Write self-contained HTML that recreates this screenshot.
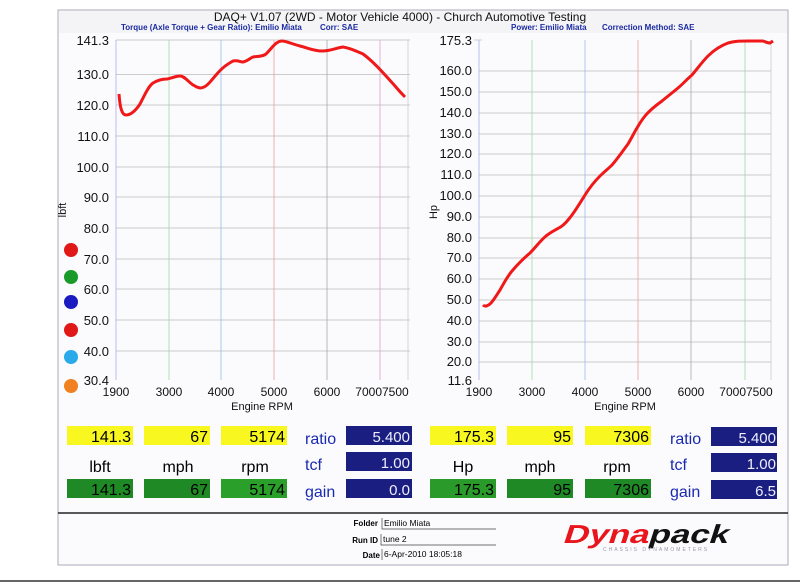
<!DOCTYPE html>
<html><head><style>
body{margin:0;background:#fff;width:800px;height:582px;overflow:hidden;font-family:"Liberation Sans",sans-serif}
</style></head><body>
<svg width="800" height="582" viewBox="0 0 800 582" xmlns="http://www.w3.org/2000/svg" font-family="Liberation Sans, sans-serif">
<rect width="800" height="582" fill="#fff"/>
<rect x="58" y="10" width="730" height="555" fill="#fbfbfd" stroke="#aab" stroke-width="1"/>
<rect x="59" y="11" width="728" height="22" fill="#f4f4f7"/>
<text x="400" y="21" font-size="12" text-anchor="middle" fill="#111">DAQ+ V1.07 (2WD - Motor Vehicle 4000) - Church Automotive Testing</text>
<text x="121" y="30" font-size="8" font-weight="bold" fill="#1a2aa0">Torque (Axle Torque + Gear Ratio): Emilio Miata</text>
<text x="320" y="30" font-size="8" font-weight="bold" fill="#1a2aa0">Corr: SAE</text>
<text x="511" y="30" font-size="8" font-weight="bold" fill="#1a2aa0">Power: Emilio Miata</text>
<text x="602" y="30" font-size="8" font-weight="bold" fill="#1a2aa0">Correction Method: SAE</text>
<g stroke="#bbb" stroke-width="0.7">
<line x1="116" y1="74.6" x2="410" y2="74.6"/><line x1="116" y1="105" x2="410" y2="105"/><line x1="116" y1="136" x2="410" y2="136"/><line x1="116" y1="167" x2="410" y2="167"/><line x1="116" y1="197" x2="410" y2="197"/><line x1="116" y1="228" x2="410" y2="228"/><line x1="116" y1="259" x2="410" y2="259"/><line x1="116" y1="289" x2="410" y2="289"/><line x1="116" y1="320" x2="410" y2="320"/><line x1="116" y1="351" x2="410" y2="351"/><line x1="116" y1="40" x2="410" y2="40"/>
</g>
<g stroke-width="0.8">
<line x1="116" y1="40" x2="116" y2="380" stroke="#aab0ee"/><line x1="169" y1="40" x2="169" y2="380" stroke="#a0dca0"/><line x1="221" y1="40" x2="221" y2="380" stroke="#9be"/><line x1="274" y1="40" x2="274" y2="380" stroke="#e8a0a0"/><line x1="327" y1="40" x2="327" y2="380" stroke="#aaa"/><line x1="380" y1="40" x2="380" y2="380" stroke="#e0a0d0"/><line x1="408" y1="40" x2="408" y2="380" stroke="#ccc"/>
</g>
<g font-size="13" fill="#111" text-anchor="end">
<text x="109" y="45">141.3</text><text x="109" y="79">130.0</text><text x="109" y="110">120.0</text><text x="109" y="141">110.0</text><text x="109" y="172">100.0</text><text x="109" y="202">90.0</text><text x="109" y="233">80.0</text><text x="109" y="264">70.0</text><text x="109" y="294">60.0</text><text x="109" y="325">50.0</text><text x="109" y="356">40.0</text><text x="109" y="385">30.4</text>
</g>
<text x="66" y="210" font-size="11" fill="#111" transform="rotate(-90 66 210)" text-anchor="middle">lbft</text>
<g font-size="12" fill="#111" text-anchor="middle">
<text x="116" y="396">1900</text><text x="169" y="396">3000</text><text x="221" y="396">4000</text><text x="274" y="396">5000</text><text x="327" y="396">6000</text><text x="382" y="396">70007500</text>
</g>
<text x="262" y="410" font-size="11" text-anchor="middle" fill="#111">Engine RPM</text>
<circle cx="71" cy="250" r="7" fill="#e01818"/><circle cx="71" cy="277" r="7" fill="#1a9a2a"/><circle cx="71" cy="302" r="7" fill="#1a1ac0"/><circle cx="71" cy="330" r="7" fill="#e01818"/><circle cx="71" cy="357" r="7" fill="#2aaae8"/><circle cx="71" cy="386" r="7" fill="#f08020"/>
<path d="M119,94 C120,108 122,115 126,115 C131,115 136,110 140,104 C146,92 149,86 153,83 C158,80 162,79 167,79 C172,78 176,76 180,76 C186,76 190,86 200,88 C206,88 210,82 216,75 C222,68 226,65 233,61 C238,60 240,62 243,62 C248,61 250,58 253,57 C258,56 262,57 266,54 C272,48 276,41 282,41 C286,41 292,44 300,46 C308,48 314,51 322,51 C330,51 336,48 343,47 C350,48 356,51 363,54 C374,62 385,75 395,86 C400,92 402,94 405,97" fill="none" stroke="#f01818" stroke-width="3"/>
<g stroke="#bbb" stroke-width="0.7">
<line x1="479" y1="71" x2="771" y2="71"/><line x1="479" y1="92" x2="771" y2="92"/><line x1="479" y1="113" x2="771" y2="113"/><line x1="479" y1="134" x2="771" y2="134"/><line x1="479" y1="154" x2="771" y2="154"/><line x1="479" y1="175" x2="771" y2="175"/><line x1="479" y1="196" x2="771" y2="196"/><line x1="479" y1="217" x2="771" y2="217"/><line x1="479" y1="238" x2="771" y2="238"/><line x1="479" y1="258" x2="771" y2="258"/><line x1="479" y1="279" x2="771" y2="279"/><line x1="479" y1="300" x2="771" y2="300"/><line x1="479" y1="321" x2="771" y2="321"/><line x1="479" y1="342" x2="771" y2="342"/><line x1="479" y1="362" x2="771" y2="362"/><line x1="474" y1="40" x2="482" y2="40"/>
</g>
<g stroke-width="0.8">
<line x1="479" y1="40" x2="479" y2="380" stroke="#aab0ee"/><line x1="532" y1="40" x2="532" y2="380" stroke="#a0dca0"/><line x1="585" y1="40" x2="585" y2="380" stroke="#9be"/><line x1="638" y1="40" x2="638" y2="380" stroke="#e8a0a0"/><line x1="691" y1="40" x2="691" y2="380" stroke="#aaa"/><line x1="745" y1="40" x2="745" y2="380" stroke="#a0dca0"/><line x1="771" y1="40" x2="771" y2="380" stroke="#ccc"/>
</g>
<g font-size="13" fill="#111" text-anchor="end">
<text x="472" y="45">175.3</text><text x="472" y="75">160.0</text><text x="472" y="96">150.0</text><text x="472" y="117">140.0</text><text x="472" y="138">130.0</text><text x="472" y="158">120.0</text><text x="472" y="179">110.0</text><text x="472" y="200">100.0</text><text x="472" y="221">90.0</text><text x="472" y="242">80.0</text><text x="472" y="262">70.0</text><text x="472" y="283">60.0</text><text x="472" y="304">50.0</text><text x="472" y="325">40.0</text><text x="472" y="346">30.0</text><text x="472" y="366">20.0</text><text x="472" y="385">11.6</text>
</g>
<text x="437" y="212" font-size="11" fill="#111" transform="rotate(-90 437 212)" text-anchor="middle">Hp</text>
<g font-size="12" fill="#111" text-anchor="middle">
<text x="479" y="396">1900</text><text x="532" y="396">3000</text><text x="585" y="396">4000</text><text x="638" y="396">5000</text><text x="691" y="396">6000</text><text x="746" y="396">70007500</text>
</g>
<text x="625" y="410" font-size="11" text-anchor="middle" fill="#111">Engine RPM</text>
<path d="M483,305 C485,307 487,306 490,304 C494,300 496,296 500,290 C504,283 507,277 512,271 C518,264 524,258 530,253 C536,247 540,241 546,236 C552,231 556,230 562,226 C567,222 568,220 572,215 C577,208 580,203 585,195 C590,187 594,182 600,176 C605,171 608,169 612,165 C618,158 622,152 628,144 C634,134 637,126 645,116 C650,110 655,106 662,101 C668,96 672,93 678,88 C684,83 686,80 692,75 C698,68 702,62 708,56 C714,50 720,46 728,43 C735,41 740,41 748,41 L763,41 C766,42 768,43 770,43 L773,41" fill="none" stroke="#f01818" stroke-width="3"/>
<g font-size="16" text-anchor="end" fill="#000">
<rect x="67" y="426" width="66" height="19" fill="#f8f820"/><text x="131" y="442">141.3</text>
<rect x="144" y="426" width="66" height="19" fill="#f8f820"/><text x="208" y="442">67</text>
<rect x="221" y="426" width="66" height="19" fill="#f8f820"/><text x="285" y="442">5174</text>
<rect x="67" y="479" width="66" height="19" fill="#1f8a25"/><text x="131" y="495">141.3</text>
<rect x="144" y="479" width="66" height="19" fill="#1f8a25"/><text x="208" y="495">67</text>
<rect x="221" y="479" width="66" height="19" fill="#2aa02a"/><text x="285" y="495">5174</text>
<rect x="430" y="426" width="66" height="19" fill="#f8f820"/><text x="494" y="442">175.3</text>
<rect x="507" y="426" width="66" height="19" fill="#f8f820"/><text x="571" y="442">95</text>
<rect x="585" y="426" width="66" height="19" fill="#f8f820"/><text x="649" y="442">7306</text>
<rect x="430" y="479" width="66" height="19" fill="#2a9a2a"/><text x="494" y="495">175.3</text>
<rect x="507" y="479" width="66" height="19" fill="#1f8a25"/><text x="571" y="495">95</text>
<rect x="585" y="479" width="66" height="19" fill="#1f8a25"/><text x="649" y="495">7306</text>
</g>
<g font-size="16" fill="#000" text-anchor="middle">
<text x="100" y="472">lbft</text><text x="178" y="472">mph</text><text x="255" y="472">rpm</text>
<text x="463" y="472">Hp</text><text x="540" y="472">mph</text><text x="617" y="472">rpm</text>
</g>
<g font-size="16" fill="#1a2ab0">
<text x="305" y="444">ratio</text><text x="305" y="470">tcf</text><text x="305" y="497">gain</text>
<text x="670" y="444">ratio</text><text x="670" y="470">tcf</text><text x="670" y="497">gain</text>
</g>
<g fill="#1a1e80"><rect x="346" y="426" width="66" height="19"/><rect x="346" y="452" width="66" height="19"/><rect x="346" y="479" width="66" height="19"/>
<rect x="711" y="427" width="66" height="19"/><rect x="711" y="453" width="66" height="19"/><rect x="711" y="480" width="66" height="19"/></g>
<g font-size="15" fill="#eef" text-anchor="end">
<text x="410" y="442">5.400</text><text x="410" y="468">1.00</text><text x="410" y="495">0.0</text>
<text x="776" y="443">5.400</text><text x="776" y="469">1.00</text><text x="776" y="496">6.5</text>
</g>
<line x1="58" y1="513" x2="788" y2="513" stroke="#222" stroke-width="1.5"/>
<g font-size="8" font-weight="bold" fill="#000" text-anchor="end">
<text x="378" y="526">Folder</text><text x="378" y="543">Run ID</text><text x="380" y="558">Date</text>
</g>
<g stroke="#444" stroke-width="0.7" fill="none">
<path d="M382,518 V529 H496"/><path d="M381,534 V545 H496"/><path d="M382,549 V560"/>
</g>
<g font-size="8.5" fill="#000"><text x="384" y="526">Emilio Miata</text><text x="383" y="542">tune 2</text><text x="384" y="557">6-Apr-2010 18:05:18</text></g>
<g transform="translate(562,543) skewX(-18)">
<text x="0" y="0" font-size="26" font-weight="bold" textLength="165" lengthAdjust="spacingAndGlyphs" fill="#e8161c">Dyna<tspan fill="#111">pack</tspan></text>
</g>
<text x="603" y="551" font-size="5" fill="#99a" letter-spacing="2">CHASSIS DYNAMOMETERS</text>
<line x1="0" y1="581" x2="800" y2="581" stroke="#333" stroke-width="1.5"/>
</svg>
</body></html>
